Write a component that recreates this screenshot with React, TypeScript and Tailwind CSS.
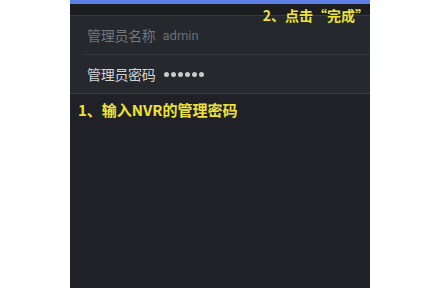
export default function App() {
  return (
    <div className="flex h-[288px] w-[428px] bg-white font-['Noto_Sans_CJK_SC','Noto_Sans',sans-serif]">
      <div className="relative ml-[70px] flex w-[300px] flex-col bg-[#1f2126]">
        <div className="h-[4px] bg-[#5b7fe4]" />
        <div className="h-[12px] border-b border-[#383b40] bg-[#1b1d21]" />
        <div className="bg-[#25282d]">
          <div className="ml-[13px] flex h-[39px] items-center gap-[7px] border-b border-[#34373c] pl-[4px] pt-[1px] text-[14px]">
            <span className="tracking-[-0.3px] text-[#73767b]">管理员名称</span>
            <span className="font-['Roboto',sans-serif] text-[13px] text-[#6a6d72]">admin</span>
          </div>
          <div className="flex h-[39px] items-center gap-[8px] border-b border-[#3a3d42] pl-[17px] text-[14px]">
            <span className="tracking-[-0.3px] text-[#d4d5d7]">管理员密码</span>
            <span className="flex gap-[2px]">
              {[0, 1, 2, 3, 4, 5].map((i) => (
                <span key={i} className="size-[5px] rounded-full bg-[#c9cacc]" />
              ))}
            </span>
          </div>
        </div>
        <div className="pl-[8px] pt-[6px] text-[15px] leading-[20px] font-bold text-[#eee23a]">1、输入NVR的管理密码</div>
        <div className="absolute right-[1px] top-[5px] text-[14px] leading-[20px] font-bold text-[#eee23a]">2、点击“完成”</div>
      </div>
    </div>
  );
}
